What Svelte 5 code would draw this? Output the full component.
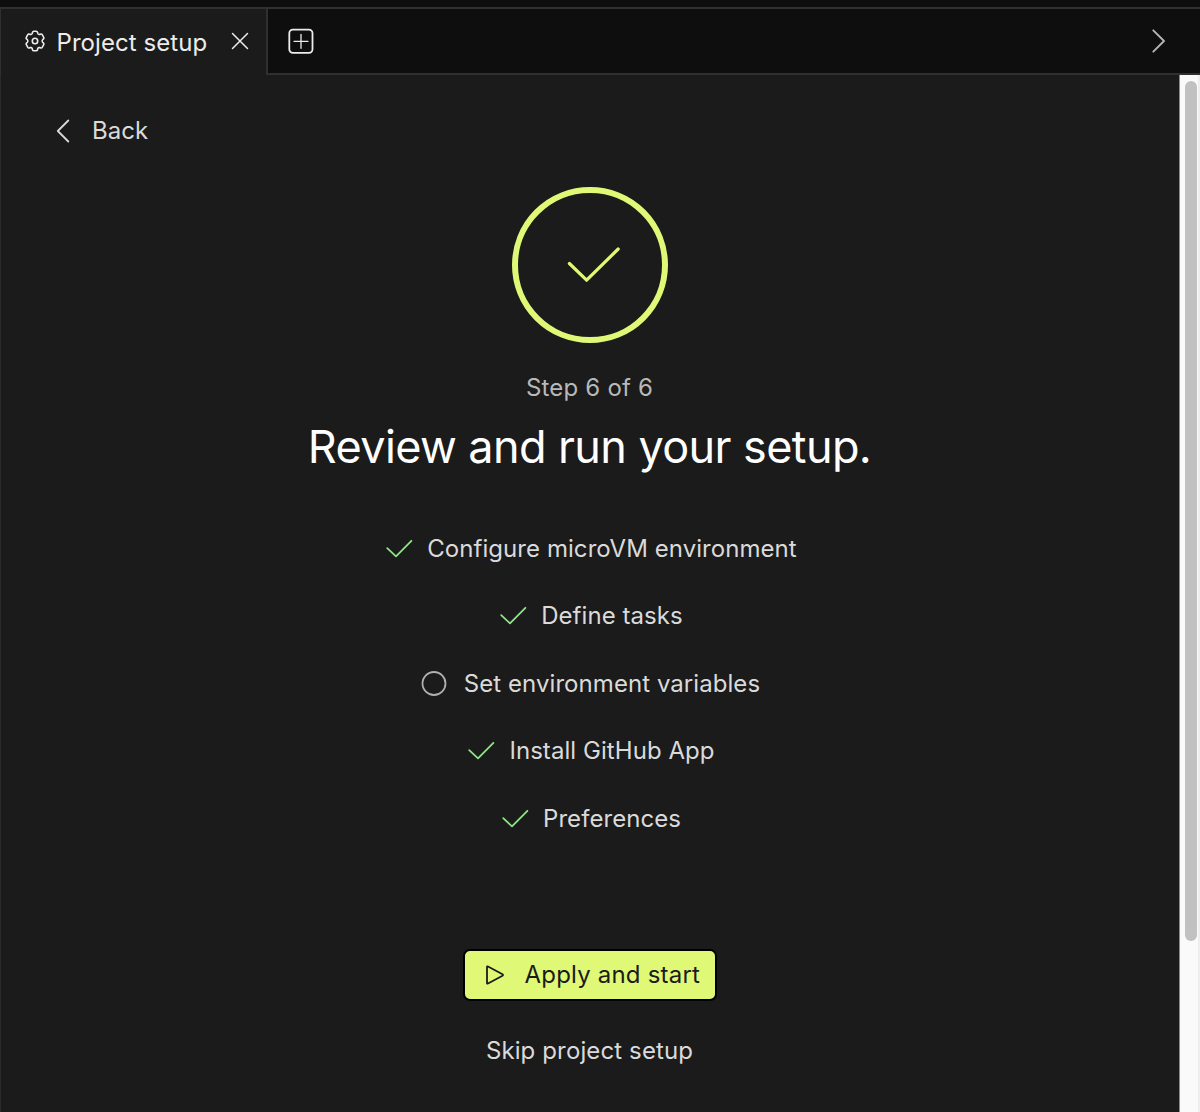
<script>
  const tasks = [
    { label: 'Configure microVM environment', done: true },
    { label: 'Define tasks', done: true },
    { label: 'Set environment variables', done: false },
    { label: 'Install GitHub App', done: true },
    { label: 'Preferences', done: true },
  ];
</script>

<div class="window">
  <header class="tabs">
    <div class="tab">
      <svg class="gear" width="24" height="24" viewBox="0 0 24 24" fill="none" stroke="currentColor" stroke-width="1.6" stroke-linejoin="round">
        <circle cx="12" cy="12" r="2.7" />
        <path d="M9.5 3.3Q9.8 2.2 10.8 2.2H13.2Q14.2 2.2 14.5 3.3L14.8 4.5Q15.3 5.7 16.5 5.4L17.7 5.1Q18.7 4.8 19.2 5.6L20.7 8.3Q21.2 9.2 20.5 9.9L19.6 10.8Q18.6 12 19.6 13.2L20.5 14.1Q21.2 14.8 20.7 15.7L19.2 18.4Q18.7 19.2 17.7 18.9L16.5 18.6Q15.3 18.3 14.8 19.5L14.5 20.7Q14.2 21.8 13.2 21.8H10.8Q9.8 21.8 9.5 20.7L9.2 19.5Q8.7 18.3 7.5 18.6L6.3 18.9Q5.3 19.2 4.8 18.4L3.3 15.7Q2.8 14.8 3.5 14.1L4.4 13.2Q5.4 12 4.4 10.8L3.5 9.9Q2.8 9.2 3.3 8.3L4.8 5.6Q5.3 4.8 6.3 5.1L7.5 5.4Q8.7 5.7 9.2 4.5Z" />
      </svg>
      <span class="tab-name">Project setup</span>
      <svg class="close" width="18" height="18" viewBox="0 0 18 18" fill="none" stroke="currentColor" stroke-width="1.5" stroke-linecap="round">
        <path d="M1.5 1.5 16.5 16.5M16.5 1.5 1.5 16.5" />
      </svg>
    </div>
    <div class="rest">
      <svg width="26" height="26" viewBox="0 0 26 26" fill="none" stroke="currentColor" stroke-linecap="round">
        <rect x="1.3" y="1.7" width="23.2" height="23.2" rx="3.6" stroke-width="1.8" />
        <path d="M13 6.3V20.3M6 13.3H20" stroke-width="1.3" />
      </svg>
      <svg class="next" width="16" height="26" viewBox="0 0 16 26" fill="none" stroke="currentColor" stroke-width="1.9" stroke-linecap="round" stroke-linejoin="round">
        <path d="M2.3 2.3 13 13 2.3 23.7" />
      </svg>
    </div>
  </header>

  <div class="body">
    <main>
      <div class="back">
        <svg width="14" height="24" viewBox="0 0 14 24" fill="none" stroke="currentColor" stroke-width="1.8" stroke-linecap="round" stroke-linejoin="round">
          <path d="M12.3 1.5 1.8 12 12.3 22.5" />
        </svg>
        <span>Back</span>
      </div>

      <div class="ring">
        <svg width="54" height="36" viewBox="0 0 54 36" fill="none" stroke="currentColor" stroke-width="3.2" stroke-linecap="round" stroke-linejoin="round">
          <path d="M2.4 16.5 19.6 33.2 51.2 2" />
        </svg>
      </div>
      <p class="step">Step 6 of 6</p>
      <h1>Review and run your setup.</h1>

      <ul>
        {#each tasks as task}
          <li>
            {#if task.done}
              <svg class="check" width="28" height="28" viewBox="0 0 28 28" fill="none" stroke="currentColor" stroke-width="1.8" stroke-linecap="round" stroke-linejoin="round">
                <path d="M2.2 13.1 11 21.4 26.4 5.8" />
              </svg>
            {:else}
              <svg class="open" width="28" height="28" viewBox="0 0 28 28" fill="none" stroke="currentColor" stroke-width="1.8">
                <circle cx="14" cy="13.5" r="11.5" />
              </svg>
            {/if}
            <span>{task.label}</span>
          </li>
        {/each}
      </ul>

      <button class="apply">
        <svg width="18" height="20" viewBox="0 0 18 20" fill="none" stroke="currentColor" stroke-width="1.8" stroke-linejoin="round">
          <path d="M1 2V18Q1 19 2 18.5L16.5 10.7Q17.5 10 16.5 9.3L2 1.5Q1 1 1 2Z" />
        </svg>
        <span>Apply and start</span>
      </button>
      <button class="skip">Skip project setup</button>
    </main>
    <div class="scroll"><div class="thumb"></div></div>
  </div>
</div>

<style>
  :global(body) { margin: 0; background: #1b1b1b; }
  .window {
    display: flex;
    flex-direction: column;
    box-sizing: border-box;
    width: 1200px;
    height: 1112px;
    overflow: hidden;
    padding-top: 7px;
    background: #0e0e0e;
    color: #dadada;
    font: 400 24px/32px Inter, "Liberation Sans", sans-serif;
    letter-spacing: 0.06px;
  }
  svg { display: block; flex: none; }
  .tabs { display: flex; height: 68px; flex: none; }
  .tab {
    display: flex;
    align-items: center;
    box-sizing: border-box;
    width: 268px;
    padding-left: 21.5px;
    border: solid #303030;
    border-width: 2px 2px 0 1px;
    background: #1b1b1b;
    color: #ececec;
  }
  .gear, .close { margin-top: -2px; }
  .tab-name { width: 152px; margin: 1px 22px 0 10px; white-space: nowrap; }
  .rest {
    display: flex;
    flex: 1;
    align-items: center;
    justify-content: space-between;
    padding: 0 33px 0 20px;
    border: solid #303030;
    border-width: 2px 0;
    color: #ececec;
  }
  .next { color: #b4b4b4; }
  .body { display: flex; flex: 1; min-height: 0; }
  main {
    display: flex;
    flex: 1;
    flex-direction: column;
    align-items: center;
    border-left: 1px solid #2a2a2a;
    background: #1b1b1b;
    padding-right: 1px;
  }
  .back {
    display: flex;
    align-self: flex-start;
    align-items: center;
    gap: 22px;
    margin: 40px 0 0 55px;
  }
  .ring {
    display: flex;
    align-items: center;
    justify-content: center;
    box-sizing: border-box;
    width: 156px;
    height: 156px;
    margin-top: 40px;
    border: 6px solid #dff976;
    border-radius: 50%;
    color: #dff976;
  }
  .ring svg { margin-left: 8px; }
  .step { margin: 29px 0 0; color: #b8b8b8; letter-spacing: 0.2px; }
  h1 { margin: 13px 0 0; color: #fff; font-size: 45px; line-height: 60px; font-weight: 400; letter-spacing: -0.6px; }
  ul { display: flex; flex-direction: column; align-items: center; gap: 35.4px; margin: 56px 0 0; padding: 0; list-style: none; }
  li { display: flex; align-items: center; gap: 14px; padding-left: 3px; }
  .check { color: #8fe388; }
  .open { color: #b0b0b0; margin: 0 2px 0 -2px; }
  button { font: inherit; letter-spacing: inherit; }
  .apply {
    display: flex;
    align-items: center;
    gap: 21px;
    box-sizing: border-box;
    width: 254px;
    height: 52px;
    margin-top: 114px;
    padding: 1px 0 0 21px;
    border: 2px solid #000;
    border-radius: 7px;
    background: #dff976;
    color: #1b1b1b;
    letter-spacing: 0.2px;
    white-space: nowrap;
  }
  .skip { margin-top: 34px; padding: 0; border: 0; background: none; color: #dadada; letter-spacing: 0.12px; }
  .scroll { box-sizing: border-box; width: 21px; padding: 6px 2px 0 5px; border-left: 1px solid #8a8a8a; border-right: 2px solid #eee; background: #fafafa; }
  .thumb { width: 12px; height: 860px; border-radius: 6px; background: #c1c1c1; }
</style>
